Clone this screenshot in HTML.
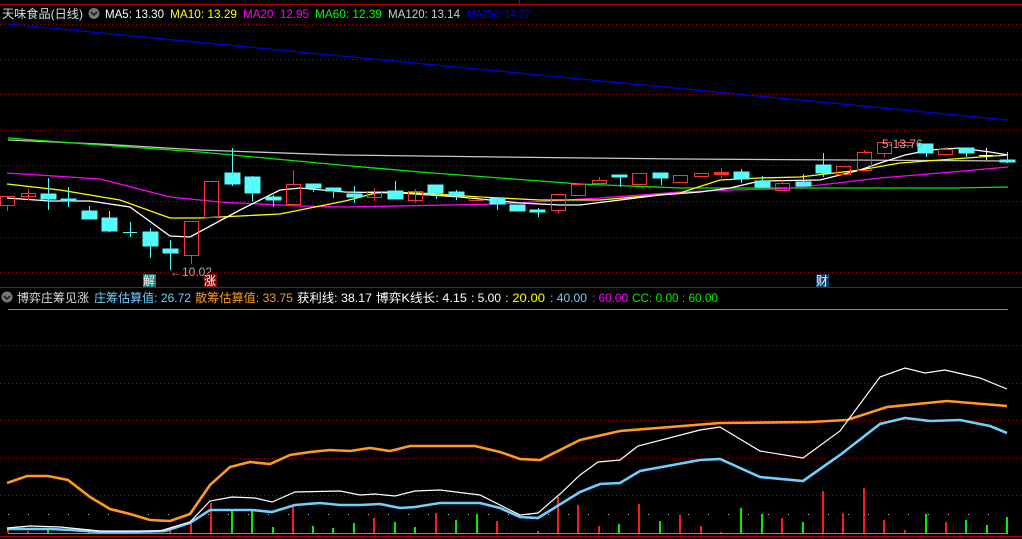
<!DOCTYPE html>
<html><head><meta charset="utf-8"><style>
html,body{margin:0;padding:0;background:#000;}
svg{display:block}
text{font-family:"Liberation Sans","Noto Sans CJK SC",sans-serif;font-size:12px}
</style></head><body>
<svg width="1022" height="539" viewBox="0 0 1022 539" xmlns="http://www.w3.org/2000/svg" shape-rendering="crispEdges">
<rect width="1022" height="539" fill="#000"/>
<line x1="0" y1="4.5" x2="1022" y2="4.5" stroke="#b00000"/>
<line x1="519.5" y1="0" x2="519.5" y2="4" stroke="#b00000"/>
<line x1="0" y1="287.5" x2="1022" y2="287.5" stroke="#b00000"/>
<line x1="0" y1="536.5" x2="1022" y2="536.5" stroke="#b00000"/>
<g stroke="#a00000" stroke-dasharray="1,3">
<line x1="0" y1="24.5" x2="1022" y2="24.5"/>
<line x1="0" y1="59.5" x2="1022" y2="59.5"/>
<line x1="0" y1="94.5" x2="1022" y2="94.5"/>
<line x1="0" y1="130.5" x2="1022" y2="130.5"/>
<line x1="0" y1="165.5" x2="1022" y2="165.5"/>
<line x1="0" y1="201.5" x2="1022" y2="201.5"/>
<line x1="0" y1="237.5" x2="1022" y2="237.5"/>
<line x1="0" y1="272.5" x2="1022" y2="272.5"/>
<line x1="0" y1="345.5" x2="1022" y2="345.5"/>
<line x1="0" y1="383.5" x2="1022" y2="383.5"/>
<line x1="0" y1="420.5" x2="1022" y2="420.5"/>
<line x1="0" y1="458.5" x2="1022" y2="458.5"/>
<line x1="0" y1="495.5" x2="1022" y2="495.5"/>
</g>
<line x1="8" y1="514.5" x2="1008" y2="514.5" stroke="#ccc" stroke-dasharray="1,19"/>
<text x="2" y="18" fill="#ddd" textLength="81" lengthAdjust="spacingAndGlyphs">天味食品(日线)</text>
<circle cx="94" cy="13.5" r="5.5" fill="#777"/><path d="M91 12l3 3 3-3" stroke="#222" fill="none" stroke-width="1.5"/>
<text x="105" y="18" fill="#fff" textLength="59" lengthAdjust="spacingAndGlyphs">MA5: 13.30</text>
<text x="170" y="18" fill="#ffff00" textLength="67" lengthAdjust="spacingAndGlyphs">MA10: 13.29</text>
<text x="243" y="18" fill="#ff00ff" textLength="66" lengthAdjust="spacingAndGlyphs">MA20: 12.95</text>
<text x="315" y="18" fill="#00ff00" textLength="67" lengthAdjust="spacingAndGlyphs">MA60: 12.39</text>
<text x="388" y="18" fill="#ccc" textLength="72" lengthAdjust="spacingAndGlyphs">MA120: 13.14</text>
<text x="467" y="18" fill="#0000ee" textLength="63" lengthAdjust="spacingAndGlyphs">MA250: 14.27</text>
<g fill="none" stroke-width="1.3" shape-rendering="auto">
<polyline stroke="#0000dd" points="8,24 1008,120"/>
<polyline stroke="#c8c8c8" points="8,140 100,144 200,150 340,155 500,157 680,159 1008,161"/>
<polyline stroke="#00ee00" points="8,138 100,145 200,152 340,165 420,172 500,178 580,184 680,188 955,188 1008,187"/>
<polyline stroke="#ff00ff" points="7,173 100,179 170,197 220,202 300,206 345,207 500,204 600,198 680,192 730,190 780,189 820,185 880,178 940,173 1008,167"/>
<polyline stroke="#ffff00" points="7,184 60,190 120,200 170,218 200,218 240,216 280,214 320,206 345,201 380,192 420,193 480,197 540,200 600,200 680,193 720,180 760,178 800,177 860,170 900,163 940,160 980,157 1008,155"/>
<polyline stroke="#ffffff" points="7,198 50,201 90,201 130,207 170,236 190,237 240,210 280,190 300,188 345,192 400,193 460,197 520,203 560,205 580,205 620,200 660,195 700,192 730,188 760,181 820,180 860,170 880,163 905,155 930,150 960,148 990,152 1008,155"/>
</g>
<g fill="#54fcfc" stroke="#54fcfc">
<line x1="48.5" y1="178" x2="48.5" y2="210"/><rect x="41" y="194" width="15" height="5"/>
<line x1="68.5" y1="187" x2="68.5" y2="207"/><rect x="61" y="199" width="15" height="2"/>
<line x1="89.5" y1="206" x2="89.5" y2="219"/><rect x="82" y="211" width="15" height="8"/>
<line x1="109.5" y1="211" x2="109.5" y2="232"/><rect x="102" y="218" width="15" height="13"/>
<line x1="130.5" y1="222" x2="130.5" y2="237"/><line x1="123" y1="232.5" x2="137" y2="232.5"/>
<line x1="150.5" y1="228" x2="150.5" y2="258"/><rect x="143" y="232" width="15" height="14"/>
<line x1="170.5" y1="240" x2="170.5" y2="270"/><rect x="163" y="249" width="15" height="4"/>
<line x1="232.5" y1="148" x2="232.5" y2="186"/><rect x="225" y="173" width="15" height="11"/>
<line x1="252.5" y1="176" x2="252.5" y2="201"/><rect x="245" y="177" width="15" height="16"/>
<line x1="273.5" y1="195" x2="273.5" y2="207"/><rect x="266" y="197" width="15" height="3"/>
<line x1="313.5" y1="184" x2="313.5" y2="192"/><rect x="306" y="184" width="15" height="4"/>
<line x1="333.5" y1="188" x2="333.5" y2="198"/><rect x="326" y="188" width="15" height="3"/>
<line x1="354.5" y1="186" x2="354.5" y2="203"/><rect x="347" y="194" width="15" height="3"/>
<line x1="395.5" y1="181" x2="395.5" y2="199"/><rect x="388" y="191" width="15" height="8"/>
<line x1="436.5" y1="185" x2="436.5" y2="199"/><rect x="428" y="185" width="15" height="8"/>
<line x1="456.5" y1="190" x2="456.5" y2="200"/><rect x="449" y="192" width="15" height="3"/>
<line x1="497.5" y1="198" x2="497.5" y2="210"/><rect x="490" y="198" width="15" height="6"/>
<rect x="510" y="205" width="15" height="6"/>
<line x1="538.5" y1="208" x2="538.5" y2="217"/><rect x="530" y="210" width="15" height="2"/>
<line x1="620.5" y1="175" x2="620.5" y2="187"/><rect x="612" y="175" width="15" height="2"/>
<line x1="661.5" y1="173" x2="661.5" y2="185"/><rect x="653" y="173" width="15" height="5"/>
<line x1="741.5" y1="169" x2="741.5" y2="183"/><rect x="734" y="172" width="15" height="7"/>
<line x1="762.5" y1="176" x2="762.5" y2="188"/><rect x="755" y="181" width="15" height="6"/>
<line x1="803.5" y1="174" x2="803.5" y2="186"/><rect x="796" y="182" width="15" height="4"/>
<line x1="823.5" y1="153" x2="823.5" y2="177"/><rect x="816" y="165" width="15" height="8"/>
<line x1="926.5" y1="144" x2="926.5" y2="157"/><rect x="918" y="144" width="15" height="9"/>
<line x1="966.5" y1="148" x2="966.5" y2="157"/><rect x="959" y="148" width="15" height="5"/>
<line x1="1007.5" y1="152" x2="1007.5" y2="163"/><rect x="1000" y="160" width="15" height="2"/>
</g>
<g stroke="#fff"><line x1="986.5" y1="148" x2="986.5" y2="160"/><line x1="979" y1="155.5" x2="993" y2="155.5"/></g>
<g fill="none" stroke="#ff3232">
<line x1="7.5" y1="205" x2="7.5" y2="211"/><rect x="0.5" y="196.5" width="14" height="9"/>
<line x1="28.5" y1="189" x2="28.5" y2="200"/><rect x="21.5" y="193.5" width="14" height="3"/>
<line x1="191.5" y1="256" x2="191.5" y2="264"/><rect x="184.5" y="221.5" width="14" height="34"/>
<rect x="204.5" y="181.5" width="14" height="36"/>
<line x1="293.5" y1="170" x2="293.5" y2="184"/><rect x="286.5" y="184.5" width="14" height="20"/>
<line x1="374.5" y1="188" x2="374.5" y2="201"/><rect x="367.5" y="191.5" width="14" height="6"/>
<line x1="415.5" y1="189" x2="415.5" y2="203"/><rect x="408.5" y="191.5" width="14" height="9"/>
<rect x="469.5" y="197.5" width="14" height="3"/>
<line x1="558.5" y1="211" x2="558.5" y2="213"/><rect x="551.5" y="194.5" width="14" height="16"/>
<rect x="571.5" y="184.5" width="14" height="11"/>
<line x1="599.5" y1="177" x2="599.5" y2="180"/><rect x="592.5" y="180.5" width="14" height="3"/>
<rect x="632.5" y="173.5" width="14" height="11"/>
<rect x="673.5" y="175.5" width="14" height="7"/>
<rect x="694.5" y="173.5" width="14" height="3"/>
<line x1="721.5" y1="168" x2="721.5" y2="178"/><rect x="714.5" y="172.5" width="14" height="2" fill="#ff3232"/>
<line x1="782.5" y1="180" x2="782.5" y2="183"/><rect x="775.5" y="183.5" width="14" height="7"/>
<rect x="836.5" y="166.5" width="14" height="8"/>
<line x1="864.5" y1="150" x2="864.5" y2="152"/><rect x="857.5" y="152.5" width="14" height="18"/>
<line x1="884.5" y1="153" x2="884.5" y2="157"/><rect x="877.5" y="142.5" width="14" height="11"/>
<rect x="898.5" y="142.5" width="14" height="3"/>
<line x1="946.5" y1="147" x2="946.5" y2="149"/><rect x="938.5" y="149.5" width="14" height="5"/>
</g>
<text x="882" y="148" fill="#aaa" font-size="12">5-13.76</text>
<text x="170" y="276" fill="#aaa">←10.02</text>
<rect x="143" y="274" width="13" height="13" fill="#1a7a7a"/><text x="143" y="285" fill="#fff">解</text>
<rect x="204" y="274" width="13" height="13" fill="#7a0a0a"/><text x="204" y="285" fill="#fff">涨</text>
<rect x="816" y="274" width="13" height="13" fill="#0d3a6a"/><text x="816" y="285" fill="#fff">财</text>
<circle cx="7" cy="297" r="5.5" fill="#777"/><path d="M4 296l3 3 3-3" stroke="#222" fill="none" stroke-width="1.5"/>
<text x="17" y="302" fill="#ddd" textLength="72" lengthAdjust="spacingAndGlyphs">博弈庄筹见涨</text>
<text x="94" y="302" fill="#6fcfff" textLength="97" lengthAdjust="spacingAndGlyphs">庄筹估算值: 26.72</text>
<text x="195" y="302" fill="#ff9a1a" textLength="98" lengthAdjust="spacingAndGlyphs">散筹估算值: 33.75</text>
<text x="297" y="302" fill="#fff" textLength="75" lengthAdjust="spacingAndGlyphs">获利线: 38.17</text>
<text x="376" y="302" fill="#fff" textLength="91" lengthAdjust="spacingAndGlyphs">博弈K线长: 4.15</text>
<text x="471" y="302" fill="#fff" textLength="30" lengthAdjust="spacingAndGlyphs">: 5.00</text>
<text x="505" y="302" fill="#ffff00" textLength="40" lengthAdjust="spacingAndGlyphs">: 20.00</text>
<text x="550" y="302" fill="#6fcfff" textLength="37" lengthAdjust="spacingAndGlyphs">: 40.00</text>
<text x="592" y="302" fill="#ff00ff" textLength="36" lengthAdjust="spacingAndGlyphs">: 60.00</text>
<text x="632" y="302" fill="#00ee00" textLength="86" lengthAdjust="spacingAndGlyphs">CC: 0.00 : 60.00</text>
<line x1="8" y1="309.5" x2="1008" y2="309.5" stroke="#00ee00"/>
<g stroke-width="2">
<g stroke="#ff1a1a">
<line x1="8" y1="533" x2="8" y2="529"/><line x1="28" y1="533" x2="28" y2="531"/><line x1="150" y1="533" x2="150" y2="530"/><line x1="170" y1="533" x2="170" y2="530"/><line x1="191" y1="533" x2="191" y2="521"/><line x1="211" y1="533" x2="211" y2="503"/><line x1="293" y1="533" x2="293" y2="506"/><line x1="374" y1="533" x2="374" y2="518"/><line x1="436" y1="533" x2="436" y2="513"/><line x1="497" y1="533" x2="497" y2="521"/><line x1="538" y1="533" x2="538" y2="531"/><line x1="558" y1="533" x2="558" y2="497"/><line x1="578" y1="533" x2="578" y2="505"/><line x1="599" y1="533" x2="599" y2="526"/><line x1="639" y1="533" x2="639" y2="504"/><line x1="680" y1="533" x2="680" y2="515"/><line x1="701" y1="533" x2="701" y2="526"/><line x1="721" y1="533" x2="721" y2="532"/><line x1="782" y1="533" x2="782" y2="518"/><line x1="823" y1="533" x2="823" y2="491"/><line x1="843" y1="533" x2="843" y2="513"/><line x1="864" y1="533" x2="864" y2="488"/><line x1="884" y1="533" x2="884" y2="520"/><line x1="905" y1="533" x2="905" y2="530"/><line x1="946" y1="533" x2="946" y2="522"/>
</g>
<g stroke="#00ee00">
<line x1="48" y1="533" x2="48" y2="528"/><line x1="89" y1="533" x2="89" y2="529"/><line x1="232" y1="533" x2="232" y2="509"/><line x1="252" y1="533" x2="252" y2="509"/><line x1="273" y1="533" x2="273" y2="527"/><line x1="313" y1="533" x2="313" y2="526"/><line x1="333" y1="533" x2="333" y2="528"/><line x1="354" y1="533" x2="354" y2="523"/><line x1="395" y1="533" x2="395" y2="522"/><line x1="415" y1="533" x2="415" y2="527"/><line x1="456" y1="533" x2="456" y2="520"/><line x1="477" y1="533" x2="477" y2="514"/><line x1="619" y1="533" x2="619" y2="524"/><line x1="660" y1="533" x2="660" y2="521"/><line x1="741" y1="533" x2="741" y2="508"/><line x1="762" y1="533" x2="762" y2="514"/><line x1="803" y1="533" x2="803" y2="522"/><line x1="926" y1="533" x2="926" y2="514"/><line x1="966" y1="533" x2="966" y2="520"/><line x1="987" y1="533" x2="987" y2="525"/><line x1="1007" y1="533" x2="1007" y2="517"/>
</g>
</g>
<line x1="8" y1="533.5" x2="1008" y2="533.5" stroke="#00ee00"/>
<g fill="none" shape-rendering="auto">
<polyline stroke="#ff9a1a" stroke-width="2.6" points="7,483 27,476 48,476 68,480 90,497 110,509 130,514 150,520 170,521 190,514 210,485 230,467 250,462 270,464 290,455 310,452 330,450 350,451 370,448 390,451 410,446 475,446 500,452 520,459 540,460 580,440 620,431 720,423 810,422 847,420 887,407 947,401 1007,406"/>
<polyline stroke="#6fcfff" stroke-width="2.6" points="7,529 50,529 70,530 100,532 130,532 165,531 190,523 210,510 252,510 272,512 295,505 320,503 340,505 360,505 380,504 400,508 415,507 440,503 480,503 500,508 520,517 538,518 580,492 600,484 620,483 640,471 700,460 720,459 760,477 803,481 840,455 880,424 905,418 930,421 960,420 990,426 1007,433"/>
<polyline stroke="#fff" stroke-width="1.2" points="7,528 30,526 60,527 100,531 160,531 190,522 210,501 232,497 255,498 272,502 295,492 340,491 360,495 375,494 395,496 415,491 440,490 480,495 520,515 538,513 560,494 580,475 598,462 620,460 638,446 700,430 720,427 760,451 803,458 840,431 880,377 905,368 925,373 945,370 980,378 1007,389"/>
</g>
</svg>
</body></html>
